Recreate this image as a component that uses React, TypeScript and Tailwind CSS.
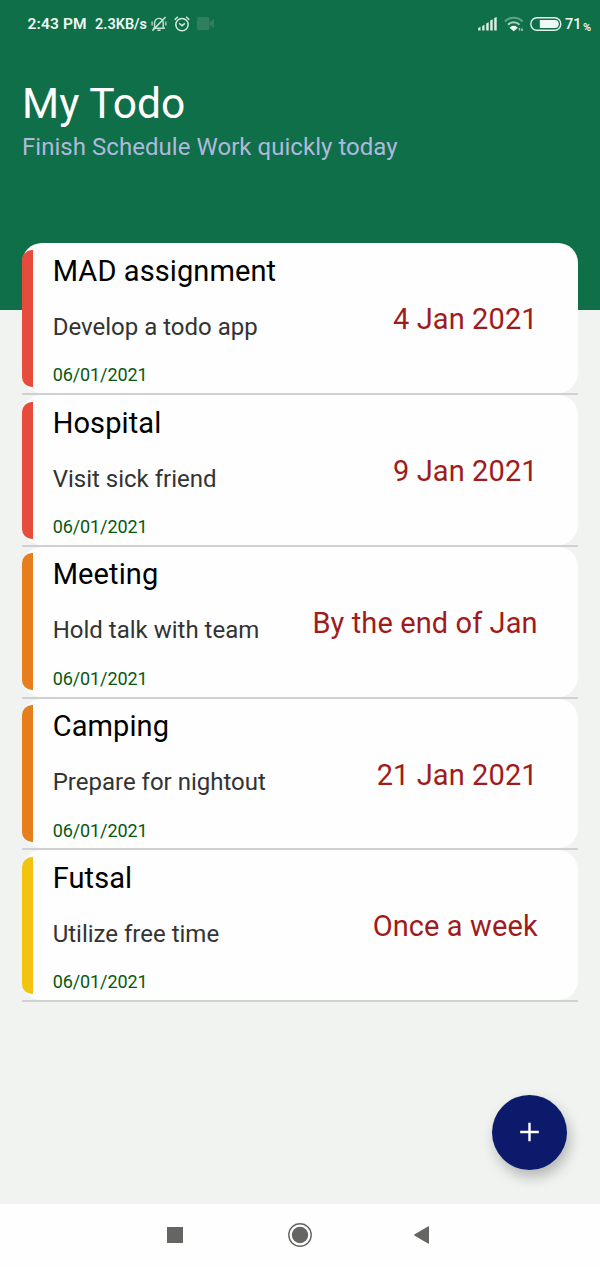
type Todo = { title: string; note: string; due: string; color: string; created: string };

const todos: Todo[] = [
  { title: 'MAD assignment', note: 'Develop a todo app', due: '4 Jan 2021', color: 'bg-[#e74b3b]', created: '06/01/2021' },
  { title: 'Hospital', note: 'Visit sick friend', due: '9 Jan 2021', color: 'bg-[#e74b3b]', created: '06/01/2021' },
  { title: 'Meeting', note: 'Hold talk with team', due: 'By the end of Jan', color: 'bg-[#e67e1c]', created: '06/01/2021' },
  { title: 'Camping', note: 'Prepare for nightout', due: '21 Jan 2021', color: 'bg-[#e67e1c]', created: '06/01/2021' },
  { title: 'Futsal', note: 'Utilize free time', due: 'Once a week', color: 'bg-[#f2c40f]', created: '06/01/2021' },
];

function MutedBell() {
  return (
    <svg className="ml-[2.500px] h-4 w-4" viewBox="0 0 16 16" fill="none" stroke="#c4e2d3" strokeWidth="1.4">
      <path d="M3.6 12V6.8a4.3 4.3 0 0 1 8.6-.2V12M2 12.3h12M6.4 14.3h3.2" />
      <path d="M14.6 1 1.4 14.6" strokeWidth="1.6" />
      <path d="M1.2 5.5v4M14.8 5.5v4" strokeWidth="1.8" opacity=".7" />
    </svg>
  );
}

function AlarmClock() {
  return (
    <svg className="ml-[7px] h-4 w-4" viewBox="0 0 16 16" fill="none" stroke="#d3ecdf" strokeWidth="1.5">
      <circle cx="8" cy="8.6" r="6.2" />
      <path d="M.7 3.7 3.9.8M15.3 3.7 12.1.8" />
      <path d="m5.2 7.2 2.8 2.5 2.9-2.3" />
    </svg>
  );
}

function Camera() {
  return (
    <svg className="ml-[7px] h-[13px] w-[17px]" viewBox="0 0 17 13" fill="#4c9074" opacity=".5">
      <rect width="12.5" height="13" rx="2" />
      <path d="M13 5l4-3v9l-4-3z" />
    </svg>
  );
}

function StatusBar() {
  return (
    <div className="flex h-[47px] items-center pl-[27.500px] pr-[9px] text-[#eefaf3]">
      <span className="mt-[2px] w-[67.500px] whitespace-nowrap text-[15.500px] font-semibold leading-none tracking-[0.15px]">2:43 PM</span>
      <span className="mt-[3px] w-[53px] whitespace-nowrap text-[14.500px] font-semibold leading-none">2.3KB/s</span>
      <MutedBell />
      <AlarmClock />
      <Camera />
      <div className="grow" />
      <svg className="h-[14px] w-5" viewBox="0 0 20 14" fill="#d9eee3">
        <path d="M.2 11 2.500 9.800v3.700H.2zM4.200 9 6.500 7.800v5.700H4.200zM8.200 6.500 10.700 5.300v8.200H8.200zM12.200 3.500 14.700 2.300v11.200h-2.500zM16.200 1 18.700 0v13.500h-2.500z" />
      </svg>
      <svg className="ml-[6px] h-4 w-[20px]" viewBox="0 0 20 16" fill="none" strokeWidth="2">
        <path d="M.8 5.500C6 .500 13.500.500 18.700 5.500" stroke="#5fa183" />
        <path d="M4 8.700c3.400-3.200 8.200-3.200 11.500 0" stroke="#a5cfba" />
        <path d="M6.500 11.700c2-1.500 4.500-1.500 6.500 0L9.700 14.500z" fill="#effaf4" stroke="#effaf4" strokeWidth="1.200" />
        <path d="M15.500 12v2.500M18 12.500V15" stroke="#a5cfba" strokeWidth="1.500" />
      </svg>
      <svg className="ml-[6px] h-[14px] w-8" viewBox="0 0 32 14" fill="none">
        <rect x=".8" y=".8" width="30" height="12.400" rx="6.200" stroke="#e2f3ea" strokeWidth="1.400" />
        <path d="M9.800 3h15a4 4 0 0 1 0 8h-15z" fill="#eefaf3" />
      </svg>
      <span className="ml-[2.500px] mt-[3px] text-[14.500px] font-medium leading-none">71</span>
      <span className="ml-[1.500px] mt-[8px] text-[11px] font-semibold leading-none">%</span>
    </div>
  );
}

function Card({ todo }: { todo: Todo }) {
  return (
    <li className="flex h-[151.750px] flex-col">
      <div className="flex h-[149.750px] items-center rounded-[20px] bg-[#fdfefd]">
        <div className={`h-[137px] w-[11px] shrink-0 rounded-l-[10px] ${todo.color}`} />
        <div className="flex h-full grow flex-col whitespace-nowrap pl-[19.700px]">
          <h2 className="mt-[10.500px] h-[34px] text-[29px] leading-[34px] tracking-[0.1px] text-black">{todo.title}</h2>
          <p className="mt-[25px] h-[28px] text-[24px] leading-[28px] text-[#333333]">{todo.note}</p>
          <p className="mt-[23.500px] h-[22px] text-[18px] leading-[22px] tracking-[-0.1px] text-[#07580f]">{todo.created}</p>
        </div>
        <p className="mt-[2px] whitespace-nowrap pr-[40.300px] text-[29px] leading-[34px] tracking-[0.1px] text-[#a01c1c]">{todo.due}</p>
      </div>
      <div className="h-[2px] bg-[#cfd0cf]" />
    </li>
  );
}

export default function App() {
  return (
    <div className="flex h-[1267px] w-[600px] flex-col overflow-hidden bg-[#f1f3f1] font-['Roboto',sans-serif]">
      <header className="h-[310px] shrink-0 bg-[#0f6f48]">
        <StatusBar />
        <h1 className="ml-[22px] mt-[32px] h-[50px] text-[42.500px] leading-[50px] tracking-[0.1px] text-white">My Todo</h1>
        <p className="ml-[22px] mt-[3px] h-[30px] text-[24px] leading-[30px] tracking-[0.04px] text-[#b0b8de]">Finish Schedule Work quickly today</p>
      </header>
      <ul className="mx-[22px] -mt-[66.600px]">
        {todos.map((todo) => <Card key={todo.title} todo={todo} />)}
      </ul>
      <div className="flex grow items-end justify-end pb-[34px] pr-[33px]">
        <button aria-label="Add todo" className="flex h-[75px] w-[75px] items-center justify-center rounded-full bg-[#0c1a6c] shadow-[3px_7px_13px_rgba(0,0,0,0.25)]">
          <svg className="h-5 w-5" viewBox="0 0 20 20" stroke="#fff" strokeWidth="2.400"><path d="M9.500 .700v18.600M.200 10h18.600" /></svg>
        </button>
      </div>
      <nav className="flex h-[63.500px] shrink-0 items-center bg-[#fdfefd] pb-px pl-[167px]">
        <div className="h-4 w-4 bg-[#656563]" />
        <svg className="ml-[105px] h-6 w-6" viewBox="0 0 24 24">
          <circle cx="12" cy="12" r="11.200" fill="none" stroke="#656563" strokeWidth="1.400" />
          <circle cx="12" cy="12" r="8.200" fill="#656563" />
        </svg>
        <svg className="ml-[102px] h-[18px] w-4" viewBox="0 0 16 18" fill="#656563"><path d="M.700 8.200 14 .500Q15 0 15 1v16q0 1-1 .500L.700 9.800Q-.300 9 .700 8.200z" /></svg>
      </nav>
    </div>
  );
}
